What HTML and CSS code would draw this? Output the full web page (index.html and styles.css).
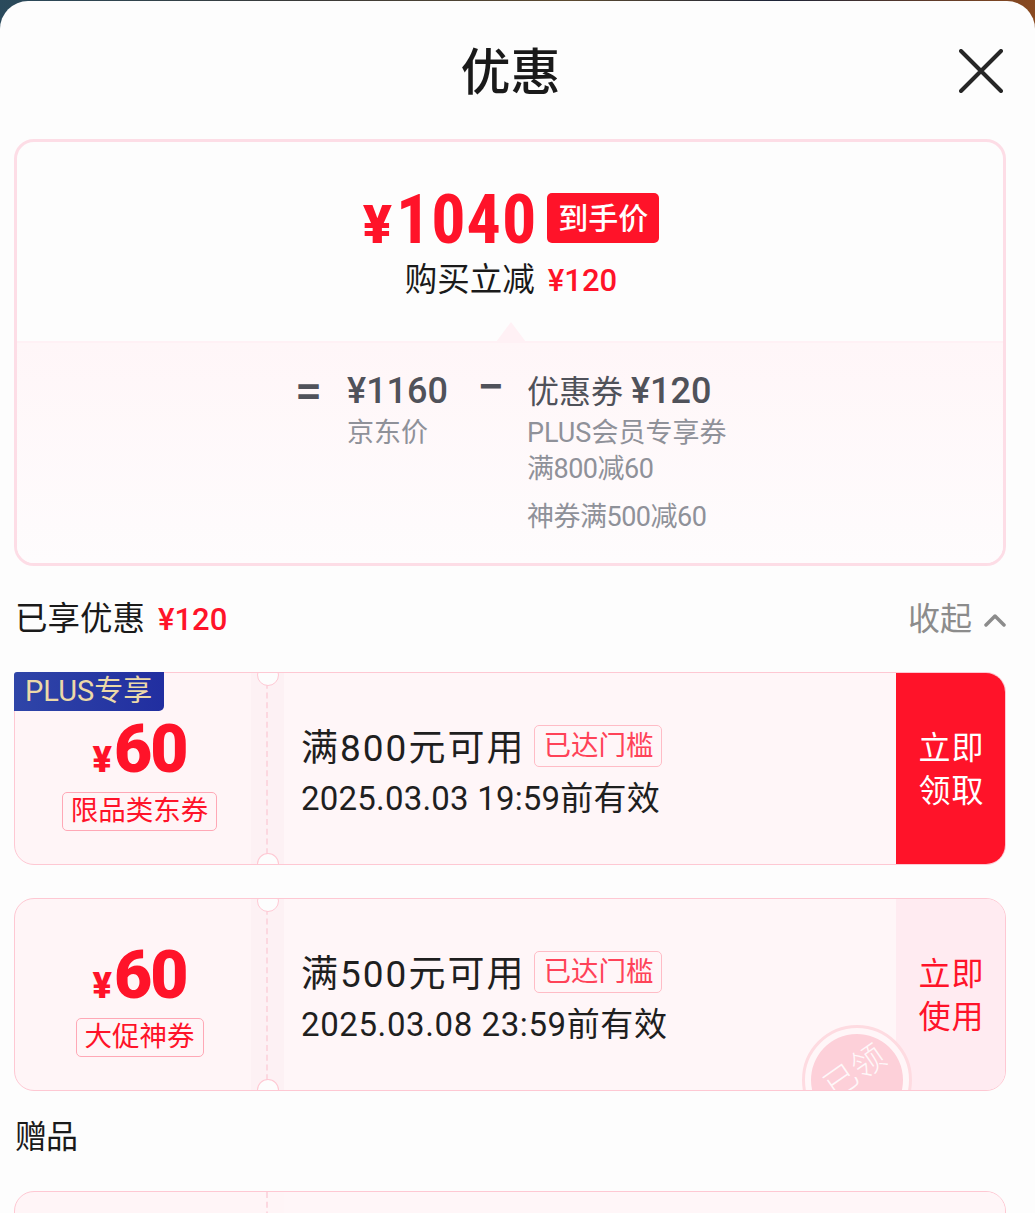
FILE: index.html
```html
<!DOCTYPE html>
<html>
  <head>
    <meta charset="UTF-8" />
    <meta name="viewport" content="width=device-width, initial-scale=1.0" />
    <title>优惠</title>
    <link rel="stylesheet" href="styles.css">
  </head>
  <body>
    <div class="sheet">
      <header class="sheet-head">
        <h1>优惠</h1>
        <svg class="close" width="44" height="44" viewBox="0 0 44 44">
          <path d="M2 2 L42 42 M42 2 L2 42" />
        </svg>
      </header>

      <section class="summary">
        <div class="summary-top">
          <div class="final-price">
            <span class="final-yen">¥</span><span class="final-num">1040</span>
            <span class="final-tag">到手价</span>
          </div>
          <div class="final-save">购买立减<span class="red-amount">¥120</span></div>
          <span class="arrow"></span>
        </div>
        <div class="summary-bottom">
          <span class="op op-eq">=</span>
          <div class="calc calc-jd">
            <div class="calc-main"><span class="calc-num">¥1160</span></div>
            <div class="calc-sub">京东价</div>
          </div>
          <span class="op op-minus">−</span>
          <div class="calc">
            <div class="calc-main">优惠券 <span class="calc-num">¥120</span></div>
            <div class="calc-sub">PLUS会员专享券</div>
            <div class="calc-sub calc-tight">满800减60</div>
            <div class="calc-sub calc-tight calc-last">神券满500减60</div>
          </div>
        </div>
      </section>

      <div class="section-row">
        <div class="section-title">已享优惠<span class="red-amount">¥120</span></div>
        <div class="collapse">收起
          <svg width="22" height="14" viewBox="0 0 22 14"><path d="M2 12 L11 3 L20 12" /></svg>
        </div>
      </div>

      <div class="coupon">
        <span class="plus-tag">PLUS专享</span>
        <div class="coupon-body">
          <div class="coupon-left">
            <div class="coupon-price"><span class="coupon-yen">¥</span>60</div>
            <span class="coupon-type">限品类东券</span>
          </div>
          <div class="coupon-gap"></div>
          <div class="coupon-main">
            <div class="coupon-cond">满800元可用<span class="reached">已达门槛</span></div>
            <div class="coupon-date">2025.03.03 19:59前有效</div>
          </div>
          <div class="coupon-btn coupon-btn-solid">立即<br>领取</div>
        </div>
      </div>

      <div class="coupon coupon-second">
        <div class="coupon-body">
          <div class="coupon-left">
            <div class="coupon-price"><span class="coupon-yen">¥</span>60</div>
            <span class="coupon-type">大促神券</span>
          </div>
          <div class="coupon-gap"></div>
          <div class="coupon-main">
            <div class="coupon-cond">满500元可用<span class="reached">已达门槛</span></div>
            <div class="coupon-date coupon-date-wide">2025.03.08 23:59前有效</div>
          </div>
          <div class="coupon-btn">立即<br>使用</div>
          <div class="stamp"><span>已领</span></div>
        </div>
      </div>

      <div class="section-title gift-title">赠品</div>

      <div class="coupon coupon-gift">
        <div class="coupon-body">
          <div class="coupon-left"></div>
          <div class="coupon-gap"></div>
          <div class="coupon-main"></div>
        </div>
      </div>
    </div>
  </body>
</html>
```

FILE: styles.css
```css
* {
  box-sizing: border-box;
  margin: 0;
  padding: 0;
}

html,
body {
  height: 1213px;
  overflow: hidden;
}

body {
  background: linear-gradient(90deg, #2a4a5c 0%, #3a3a38 30%, #5c4a30 55%, #1c2438 75%, #8a4a20 100%);
  font-family: Roboto, "Noto Sans CJK SC", sans-serif;
  color: #1a1a1a;
  padding-top: 1px;
}

.sheet {
  height: 1212px;
  padding: 0 29px 0 14px;
  background-color: #fdfdfd;
  border-radius: 28px 28px 0 0;
  overflow: hidden;
}

.sheet-head {
  height: 138px;
  display: flex;
  align-items: center;
  justify-content: center;
  position: relative;
}

.sheet-head h1 {
  font-size: 50px;
  font-weight: 500;
  line-height: 1;
  margin-left: 1px;
  margin-top: 6px;
}

.close {
  position: absolute;
  right: 3px;
  top: 48px;
}

.close path {
  fill: none;
  stroke: #262626;
  stroke-width: 4;
  stroke-linecap: round;
}

/* top card */
.summary {
  width: 992px;
  height: 427px;
  border: 3px solid #fddde6;
  border-radius: 20px;
  overflow: hidden;
}

.summary-top {
  height: 199px;
  padding-top: 42px;
  text-align: center;
  position: relative;
}

.final-price {
  height: 70px;
  display: flex;
  justify-content: center;
  align-items: center;
  color: #ff1329;
  margin-left: 2px;
}

.final-yen {
  font-size: 54px;
  font-weight: 900;
  margin-top: 11px;
  margin-right: 4px;
}

.final-num {
  font-size: 68px;
  font-weight: 700;
  letter-spacing: 1px;
  font-stretch: condensed;
  margin-top: 2px;
}

.final-tag {
  width: 112px;
  height: 50px;
  margin-left: 10px;
  margin-top: -2px;
  background-color: #ff1329;
  border-radius: 5px;
  color: #fff;
  font-size: 30px;
  font-weight: 500;
  line-height: 52px;
}

.final-save {
  margin-top: 4px;
  margin-left: 2px;
  font-size: 32.5px;
  line-height: 44px;
}

.red-amount {
  margin-left: 13px;
  color: #ff1329;
  font-size: 31px;
  font-weight: 500;
}

.arrow {
  position: absolute;
  left: 479px;
  bottom: -1px;
  width: 0;
  height: 0;
  border-left: 15px solid transparent;
  border-right: 15px solid transparent;
  border-bottom: 20px solid #fff1f5;
}

.summary-bottom {
  height: 222px;
  padding-top: 25px;
  display: flex;
  background: linear-gradient(180deg, #fff6f8 0%, #fefcfd 100%);
  border-top: 2px solid #fff1f5;
  color: #50525a;
}

.op {
  font-size: 48px;
  font-weight: 500;
  line-height: 46px;
}

.op-eq {
  margin-left: 278px;
  width: 52px;
}

.op-minus {
  width: 50px;
  margin-top: -4px;
}

.calc-jd {
  width: 130px;
}

.calc-main {
  font-size: 32px;
  line-height: 46px;
  white-space: nowrap;
}

.calc-num {
  font-size: 36px;
  font-weight: 500;
}

.calc-sub {
  font-size: 27px;
  line-height: 36px;
  color: #8f9199;
  white-space: nowrap;
}

.calc-tight {
  letter-spacing: -0.5px;
}

.calc-last {
  margin-top: 12px;
}

/* rows */
.section-row {
  width: 992px;
  height: 106px;
  display: flex;
  justify-content: space-between;
  align-items: center;
}

.section-title {
  font-size: 32.5px;
  line-height: 44px;
  margin-left: 1px;
}

.collapse {
  display: flex;
  align-items: center;
  gap: 12px;
  margin-top: -6px;
  font-size: 32px;
  color: #8c8c8c;
}

.collapse svg {
  margin-top: 8px;
}

.collapse path {
  fill: none;
  stroke: #8c8c8c;
  stroke-width: 3.5;
  stroke-linecap: round;
  stroke-linejoin: round;
}

/* coupons */
.coupon {
  width: 992px;
  height: 193px;
  position: relative;
  background-color: #fff5f7;
  border: 1px solid #fec8d3;
  border-radius: 20px;
}

.coupon-body {
  height: 100%;
  display: flex;
  position: relative;
  border-radius: 19px;
  overflow: hidden;
}

.coupon-second {
  margin-top: 33px;
}

.coupon-gift {
  margin-top: 8px;
}

.plus-tag {
  position: absolute;
  left: -1px;
  top: -1px;
  z-index: 1;
  width: 150px;
  height: 39px;
  background: linear-gradient(90deg, #2f45a8, #212ea0);
  border-radius: 3px 0 5px 0;
  color: #ecd9a8;
  font-size: 29px;
  line-height: 39px;
  padding-left: 11px;
  white-space: nowrap;
}

.coupon-left {
  width: 236px;
  padding: 39px 0 0 13px;
  text-align: center;
  flex-shrink: 0;
}

.coupon-price {
  height: 76px;
  color: #ff1329;
  font-size: 66px;
  font-weight: 900;
  line-height: 76px;
  letter-spacing: -2px;
}

.coupon-yen {
  font-size: 36px;
  letter-spacing: 2px;
}

.coupon-type {
  display: inline-block;
  height: 39px;
  margin-top: 4px;
  padding: 0 8px;
  border: 1px solid #ffa8b6;
  border-radius: 5px;
  color: #ff1329;
  font-size: 27.5px;
  line-height: 36px;
  white-space: nowrap;
}

.coupon-gap {
  width: 33px;
  flex-shrink: 0;
  position: relative;
  background-color: #fdf1f4;
}

.coupon-gap::before {
  content: "";
  position: absolute;
  left: 15px;
  top: 0;
  bottom: 0;
  border-left: 2px dashed #fcd8e0;
}

.coupon-gap::after {
  content: "";
  position: absolute;
  left: 6px;
  top: -9px;
  width: 20px;
  height: 20px;
  border-radius: 50%;
  background-color: #fdfdfd;
  border: 1px solid #fec8d3;
  box-shadow: 0 189px 0 -1px #fdfdfd, 0 189px 0 0 #fec8d3;
}

.coupon-gift .coupon-gap {
  background-color: transparent;
}

.coupon-gift .coupon-gap::after {
  display: none;
}

.coupon-main {
  flex: 1;
  padding: 50px 0 0 17px;
  background-color: #fff6f8;
}

.coupon-cond {
  display: flex;
  align-items: center;
  font-size: 37px;
  line-height: 52px;
  letter-spacing: 2px;
  color: #1f1f1f;
}

.reached {
  height: 42px;
  margin-left: 9px;
  margin-bottom: 6px;
  padding: 0 8px;
  border: 1px solid #ffbcc6;
  border-radius: 5px;
  color: #ff4358;
  font-size: 27.5px;
  line-height: 39px;
  letter-spacing: 0;
  white-space: nowrap;
}

.coupon-date {
  margin-top: 1px;
  font-size: 33px;
  line-height: 46px;
  letter-spacing: 0.2px;
  color: #1f1f1f;
}

.coupon-date-wide {
  letter-spacing: 0.6px;
}

.coupon-btn {
  width: 109px;
  padding: 54px 0 0 2px;
  text-align: center;
  font-size: 32px;
  line-height: 43px;
  letter-spacing: 1px;
  color: #ff1329;
  background-color: #ffebf1;
  flex-shrink: 0;
}

.coupon-btn-solid {
  background-color: #ff1329;
  color: #fff;
}

.stamp {
  position: absolute;
  left: 787px;
  top: 126px;
  width: 110px;
  height: 110px;
  border: 3px solid #fedbe1;
  border-radius: 50%;
  padding: 6px;
  background-color: #fff6f8;
}

.stamp span {
  display: block;
  width: 92px;
  height: 92px;
  padding-left: 6px;
  border-radius: 50%;
  background-color: #fdd0d9;
  color: rgba(255, 255, 255, 0.85);
  font-size: 33px;
  font-weight: 300;
  line-height: 76px;
  text-align: center;
  transform: rotate(-35deg);
  white-space: nowrap;
}

.gift-title {
  height: 92px;
  display: flex;
  align-items: center;
  font-size: 32px;
  letter-spacing: -1px;
}
```
